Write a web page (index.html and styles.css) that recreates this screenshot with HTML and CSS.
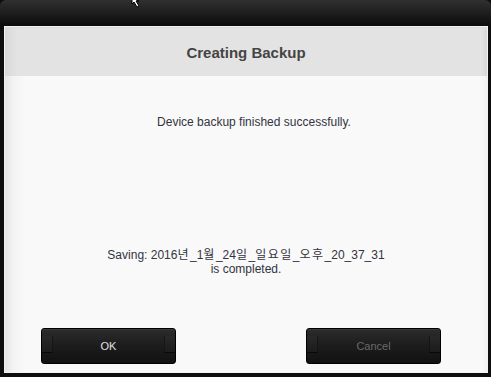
FILE: index.html
```html
<!DOCTYPE html>
<html lang="en">
<head>
    <meta charset="UTF-8">
    <meta name="viewport" content="width=device-width, initial-scale=1.0">
    <title>Creating Backup</title>
    <link rel="stylesheet" href="styles.css">
</head>
<body>
    <div class="window">
        <div class="titlebar"></div>
        <div class="panel">
            <div class="panel-header">Creating Backup</div>
            <div class="panel-body">
                <p class="message">Device backup finished successfully.</p>
                <p class="status">Saving: 2016<span class="ko">년</span>_1<span class="ko">월</span>_24<span class="ko">일</span>_<span class="ko">일요일</span>_<span class="ko">오후</span>_20_37_31<br>is completed.</p>
                <div class="actions">
                    <button class="btn">OK</button>
                    <button class="btn btn-disabled">Cancel</button>
                </div>
            </div>
        </div>
        <svg class="cursor" width="12" height="12" viewBox="0 0 12 12">
            <path d="M1 0 L1 6 L3 4 L6 9 L8 8 L5 3 L8 3 Z" fill="#fff" stroke="#000" stroke-width="1"/>
        </svg>
    </div>
</body>
</html>
```

FILE: styles.css
```css
body {
    margin: 0;
    background-color: #0d0d0d;
    font-family: "Liberation Sans", "Noto Sans CJK KR", sans-serif;
}
.window {
    position: relative;
    width: 491px;
    height: 377px;
    display: flex;
    flex-direction: column;
    background-color: #0e0e0e;
    border-radius: 6px 6px 0 0;
    overflow: hidden;
}
.titlebar {
    height: 26px;
    background: linear-gradient(#303030, #1a1a1a 60%, #0b0b0b);
}
.panel {
    margin: 0 3px 4px 4px;
    border: 1px solid #f2f2f2;
    flex: 1;
    display: flex;
    flex-direction: column;
    background-color: #f9f9f9;
}
.panel-header {
    height: 48px;
    line-height: 50px;
    text-align: center;
    font-size: 15px;
    font-weight: bold;
    color: #444;
    background: linear-gradient(90deg, #d8d8d8, #e3e3e3 12px, #e3e3e3 calc(100% - 6px), #d8d8d8);
    border-top: 1px solid #dcdcdc;
}
.panel-body {
    flex: 1;
    display: flex;
    flex-direction: column;
    background: linear-gradient(90deg, #e6e6e6, #f3f3f3 8px, #f9f9f9 20px, #f9f9f9 calc(100% - 6px), #f1f1f1);
}
.message,
.status {
    margin: 0;
    text-align: center;
    font-size: 12px;
    line-height: 14px;
    color: #333340;
}
.message {
    margin-top: 39px;
    padding-left: 16px;
}
.status {
    margin-top: 119px;
}
.ko {
    letter-spacing: 1.5px;
}
.actions {
    margin-top: 52px;
    padding: 0 46px 0 36px;
    display: flex;
    justify-content: space-between;
}
.btn {
    position: relative;
    width: 135px;
    height: 36px;
    border: 1px solid #000;
    border-radius: 3px;
    background: linear-gradient(#2c2c2c, #1c1c1c 50%, #111);
    color: #e0e0e0;
    font-family: "Liberation Sans", sans-serif;
    font-size: 11px;
    box-shadow: inset 0 1px 0 #3a3a3a;
}
.btn::before,
.btn::after {
    content: "";
    position: absolute;
    bottom: 10px;
    width: 10px;
    height: 16px;
    border-bottom: 1px solid #080808;
    background-color: rgba(255, 255, 255, 0.02);
}
.btn::before {
    left: 0;
    border-right: 1px solid #151515;
}
.btn::after {
    right: 0;
    border-left: 1px solid #151515;
}
.btn-disabled {
    color: #6a6a6a;
}
.cursor {
    position: absolute;
    left: 131px;
    top: -2px;
}
```
